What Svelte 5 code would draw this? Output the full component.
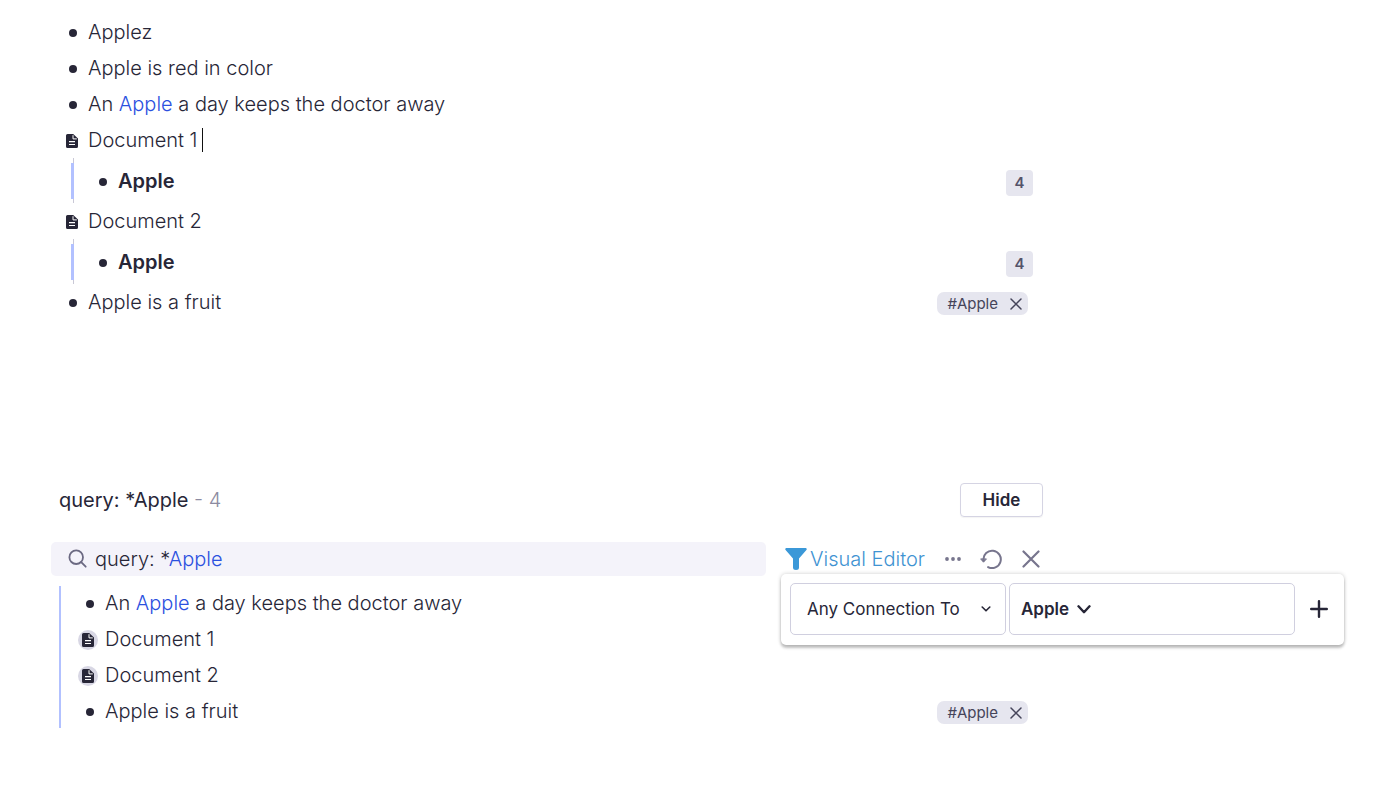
<script>
  const outline = [
    { kind: 'bullet', parts: [{ text: 'Applez' }] },
    { kind: 'bullet', parts: [{ text: 'Apple is red in color' }] },
    { kind: 'bullet', parts: [{ text: 'An ' }, { text: 'Apple', link: true }, { text: ' a day keeps the doctor away' }] },
    { kind: 'doc', parts: [{ text: 'Document 1' }], caret: true, child: 'Apple', count: 4 },
    { kind: 'doc', parts: [{ text: 'Document 2' }], child: 'Apple', count: 4 },
    { kind: 'bullet', parts: [{ text: 'Apple is a fruit' }], tag: '#Apple' },
  ];
  const results = [
    { kind: 'bullet', parts: outline[2].parts },
    { kind: 'doc', parts: [{ text: 'Document 1' }] },
    { kind: 'doc', parts: [{ text: 'Document 2' }] },
    { kind: 'bullet', parts: [{ text: 'Apple is a fruit' }], tag: '#Apple' },
  ];
</script>

{#snippet marker(kind)}
  <span class="marker" class:doc={kind === 'doc'}>
    {#if kind === 'doc'}
      <svg width="12" height="14" viewBox="0 0 12 14" aria-hidden="true">
        <path d="M1.5 0H7.2L12 4.6V12.5A1.5 1.5 0 0 1 10.5 14H1.5A1.5 1.5 0 0 1 0 12.5V1.5A1.5 1.5 0 0 1 1.5 0Z" fill="#272637" />
        <path d="M7 1.2V4.9H10.8" fill="none" stroke="#fff" stroke-width="1" />
        <path d="M3 7.7H9M3 10.5H9" stroke="#fff" stroke-width="1.2" />
      </svg>
    {:else}
      <i class="dot"></i>
    {/if}
  </span>
{/snippet}

{#snippet line(item)}
  <div class="row">
    {@render marker(item.kind)}
    <span class="text">{#each item.parts as part}{#if part.link}<a href="#apple">{part.text}</a>{:else}{part.text}{/if}{/each}</span>
    {#if item.caret}<i class="caret"></i>{/if}
    {#if item.tag}
      <span class="tag">
        {item.tag}
        <button aria-label="Remove tag">
          <svg width="12" height="12" viewBox="0 0 12 12"><path d="M1 1L11 11M11 1L1 11" stroke="#45445a" stroke-width="1.5" stroke-linecap="round" /></svg>
        </button>
      </span>
    {/if}
  </div>
{/snippet}

<main>
  <ul class="outline">
    {#each outline as item}
      <li>
        {@render line(item)}
        {#if item.child}
          <div class="nested">
            {@render marker('bullet')}
            <strong>{item.child}</strong>
            <button class="count">{item.count}</button>
          </div>
        {/if}
      </li>
    {/each}
  </ul>

  <section>
    <header>
      <h2>query: *Apple <span>- 4</span></h2>
      <button class="hide">Hide</button>
    </header>

    <div class="query">
      <div class="search">
        <svg width="20" height="20" viewBox="0 0 20 20" fill="none" stroke="#6b6982" stroke-width="1.8" stroke-linecap="round" aria-hidden="true">
          <circle cx="8.2" cy="8.2" r="6.8" /><path d="M13.2 13.2L17.7 17.7" />
        </svg>
        <div class="field" role="textbox" aria-label="Search query" tabindex="0" contenteditable="true" spellcheck="false">query: *<a href="#apple">Apple</a></div>
      </div>

      <div class="tools">
        <button class="visual">
          <svg width="22" height="22" viewBox="0 0 22 22" aria-hidden="true">
            <path d="M1.2 0H20.8Q22.4 .7 21.4 2L14 10.6V19.5Q14 22 11 22Q8 22 8 19.5V10.6L.6 2Q-.4 .7 1.2 0Z" fill="#3b98d8" />
          </svg>
          Visual Editor
        </button>
        <button class="more" aria-label="More">
          <svg width="16" height="4" viewBox="0 0 16 4" fill="#77758d"><circle cx="2" cy="2" r="1.9" /><circle cx="8" cy="2" r="1.9" /><circle cx="14" cy="2" r="1.9" /></svg>
        </button>
        <button class="reset" aria-label="Reset">
          <svg width="22" height="20" viewBox="0 0 22 20" fill="none" stroke="#77758d" stroke-width="2" stroke-linecap="round" stroke-linejoin="round">
            <path d="M3.4 10.8A8.7 8.7 0 1 1 8.1 18.1" />
            <path d="M.9 10.2L3.5 13.2L6.2 10.2Z" fill="#77758d" stroke-width="1" />
          </svg>
        </button>
        <button aria-label="Close">
          <svg width="18" height="18" viewBox="0 0 18 18"><path d="M1.5 1.5L16.5 16.5M16.5 1.5L1.5 16.5" stroke="#77758d" stroke-width="2.2" stroke-linecap="round" /></svg>
        </button>

        <div class="popover">
          <div class="box connection">
            <select aria-label="Connection type"><option>Any Connection To</option></select>
            <svg width="10" height="6" viewBox="0 0 10 6" fill="none"><path d="M1.2 1L5 4.8L8.8 1" stroke="#272637" stroke-width="1.6" stroke-linecap="round" stroke-linejoin="round" /></svg>
          </div>
          <div class="box target">
            <div class="pick">
              <select aria-label="Connected node"><option>Apple</option></select>
              <svg width="14" height="9" viewBox="0 0 14 9" fill="none"><path d="M1.5 1.3L7 7.2L12.5 1.3" stroke="#272637" stroke-width="2.4" stroke-linecap="round" stroke-linejoin="round" /></svg>
            </div>
          </div>
          <button class="add" aria-label="Add condition">
            <svg width="18" height="18" viewBox="0 0 18 18"><path d="M9 1.2V16.8M1.2 9H16.8" stroke="#272637" stroke-width="2.4" stroke-linecap="round" /></svg>
          </button>
        </div>
      </div>
    </div>

    <div class="results">
      {#each results as item}{@render line(item)}{/each}
    </div>
  </section>
</main>

<style>
  :global(body) {
    margin: 0;
    background: #fff;
  }
  main {
    box-sizing: border-box;
    padding: 14px 332px 40px 51px;
    font: 300 20px/36px Inter, sans-serif;
    color: #272637;
  }
  button,
  select {
    font: inherit;
    color: inherit;
    padding: 0;
    border: 0;
    background: none;
    cursor: pointer;
  }
  button {
    display: flex;
    align-items: center;
    justify-content: center;
  }
  svg {
    display: block;
    flex: none;
  }
  a {
    color: #2b50df;
    text-decoration: none;
  }
  .outline {
    list-style: none;
    margin: 0;
    padding: 0 0 0 11px;
  }
  .row {
    display: flex;
    align-items: center;
    height: 36px;
  }
  .marker {
    display: grid;
    place-items: center;
    width: 20px;
    height: 20px;
    margin-right: 6px;
    padding-top: 2px;
    box-sizing: border-box;
  }
  .marker:not(.doc) {
    padding-left: 2px;
  }
  .dot {
    width: 8px;
    height: 8px;
    border-radius: 50%;
    background: #272637;
  }
  .caret {
    width: 1px;
    height: 24px;
    margin-left: 5px;
    background: #111;
  }
  .nested {
    display: flex;
    align-items: center;
    height: 45px;
    margin-left: 9px;
    padding: 0 10px 0 21px;
    background:
      linear-gradient(#b2c1ff, #b2c1ff) 0 5px / 3px 36px no-repeat,
      linear-gradient(#c9c8d6, #c9c8d6) 2px 0 / 1px 100% no-repeat;
  }
  .nested strong {
    font-weight: 600;
  }
  .count {
    width: 27px;
    height: 26px;
    margin-top: 5px;
    margin-left: auto;
    border-radius: 4px;
    background: #e6e6ef;
    color: #54536a;
    font-size: 15px;
    font-weight: 600;
    line-height: 26px;
  }
  .tag {
    display: flex;
    align-items: center;
    gap: 12px;
    height: 23px;
    margin: 3px 15px 0 auto;
    padding: 0 6px 0 10px;
    border-radius: 7px;
    background: #e6e6ef;
    color: #45445a;
    font-size: 15px;
    font-weight: 400;
    line-height: 23px;
  }
  section {
    padding-top: 162px;
  }
  header {
    display: flex;
    align-items: center;
    justify-content: space-between;
    padding-left: 8px;
  }
  h2 {
    margin: 0;
    font-size: 20px;
    font-weight: 400;
  }
  h2 span {
    color: #8c8ba1;
    font-weight: 300;
  }
  .hide {
    box-sizing: border-box;
    width: 83px;
    height: 34px;
    border: 1px solid #d5d4e3;
    border-radius: 4px;
    box-shadow: 0 1px 1px #0000000c;
    font-size: 17px;
    font-weight: 600;
  }
  .query {
    display: flex;
    gap: 15px;
    height: 34px;
    margin-top: 24px;
  }
  .search {
    flex: 1;
    display: flex;
    align-items: center;
    gap: 7px;
    padding-left: 17px;
    border-radius: 5px;
    background: #f4f3fa;
  }
  .field {
    flex: 1;
    line-height: 34px;
    outline: none;
  }
  .tools {
    position: relative;
    display: flex;
    align-items: center;
    justify-content: space-between;
    box-sizing: border-box;
    width: 262px;
    padding: 0 3px 0 4px;
  }
  .visual {
    gap: 3px;
    color: #3f93d2;
    line-height: 34px;
    white-space: nowrap;
  }
  .popover {
    position: absolute;
    top: 32px;
    left: 0;
    right: -301px;
    display: flex;
    gap: 3px;
    box-sizing: border-box;
    height: 71px;
    padding: 9px 5px 9px 9px;
    border-radius: 5px;
    background: #fff;
    box-shadow: 0 0 4px #00000033, 0 3px 3px #00000038;
  }
  .box {
    display: flex;
    align-items: center;
    box-sizing: border-box;
    height: 52px;
    border: 1px solid #d0cfdf;
    border-radius: 5px;
  }
  .connection,
  .pick {
    display: grid;
    align-items: center;
  }
  .box select {
    grid-area: 1 / 1;
    appearance: none;
    outline: none;
  }
  .box svg {
    grid-area: 1 / 1;
    justify-self: end;
    pointer-events: none;
  }
  .connection {
    width: 216px;
    padding: 0 14px 0 16px;
    font-size: 17px;
    font-weight: 400;
  }
  .target {
    flex: 1;
    padding-left: 11px;
    font-size: 17px;
    font-weight: 600;
  }
  .pick select {
    padding-right: 21px;
  }
  .add {
    width: 40px;
    height: 52px;
    margin-left: 1px;
  }
  .results {
    display: flex;
    flex-direction: column;
    justify-content: space-between;
    height: 142px;
    margin: 10px 0 0 8px;
    padding-left: 17px;
    border-left: 2px solid #b2c1ff;
  }
  .results .row {
    height: 34px;
    line-height: 34px;
  }
  .results .marker {
    margin-right: 7px;
  }
  .results .marker:not(.doc) {
    padding-left: 4px;
  }
  .results .doc {
    margin-top: 2px;
    border-radius: 50%;
    background: #d8d7e4;
    padding: 0;
  }
</style>
